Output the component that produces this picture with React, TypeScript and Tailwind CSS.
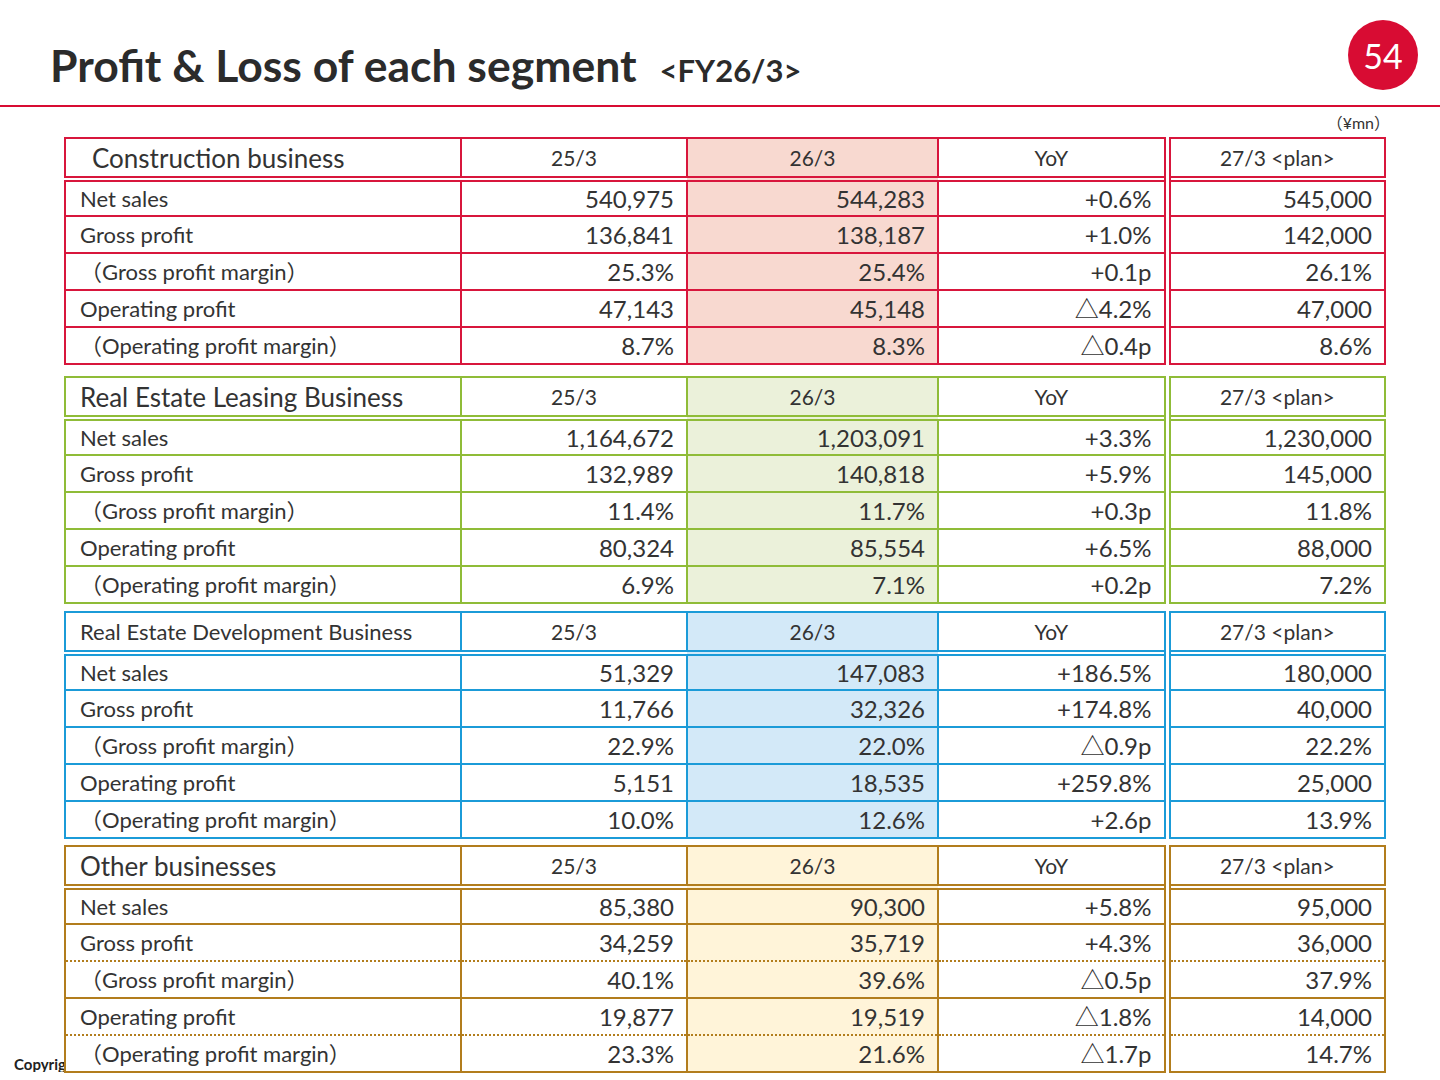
type Theme = {
  name: string;
  nameClass: string;
  line: string;
  fill: string;
  dotted?: boolean;
  rows: string[][];
};

const LABELS = [
  "Net sales",
  "Gross profit",
  "（Gross profit margin）",
  "Operating profit",
  "（Operating profit margin）",
];

const SECTIONS: Theme[] = [
  {
    name: "Construction business",
    nameClass: "pl-[26px] text-[26px]",
    line: "border-[#d8163c]",
    fill: "bg-[#f8d9d0]",
    rows: [
      ["540,975", "544,283", "+0.6%", "545,000"],
      ["136,841", "138,187", "+1.0%", "142,000"],
      ["25.3%", "25.4%", "+0.1p", "26.1%"],
      ["47,143", "45,148", "△4.2%", "47,000"],
      ["8.7%", "8.3%", "△0.4p", "8.6%"],
    ],
  },
  {
    name: "Real Estate Leasing Business",
    nameClass: "pl-[14px] text-[26px]",
    line: "border-[#8fbc38]",
    fill: "bg-[#ebf1da]",
    rows: [
      ["1,164,672", "1,203,091", "+3.3%", "1,230,000"],
      ["132,989", "140,818", "+5.9%", "145,000"],
      ["11.4%", "11.7%", "+0.3p", "11.8%"],
      ["80,324", "85,554", "+6.5%", "88,000"],
      ["6.9%", "7.1%", "+0.2p", "7.2%"],
    ],
  },
  {
    name: "Real Estate Development Business",
    nameClass: "pl-[14px] text-[22px]",
    line: "border-[#1b9bd8]",
    fill: "bg-[#d3e9f8]",
    rows: [
      ["51,329", "147,083", "+186.5%", "180,000"],
      ["11,766", "32,326", "+174.8%", "40,000"],
      ["22.9%", "22.0%", "△0.9p", "22.2%"],
      ["5,151", "18,535", "+259.8%", "25,000"],
      ["10.0%", "12.6%", "+2.6p", "13.9%"],
    ],
  },
  {
    name: "Other businesses",
    nameClass: "pl-[14px] text-[26px]",
    line: "border-[#b27d1d]",
    fill: "bg-[#fff4d9]",
    dotted: true,
    rows: [
      ["85,380", "90,300", "+5.8%", "95,000"],
      ["34,259", "35,719", "+4.3%", "36,000"],
      ["40.1%", "39.6%", "△0.5p", "37.9%"],
      ["19,877", "19,519", "△1.8%", "14,000"],
      ["23.3%", "21.6%", "△1.7p", "14.7%"],
    ],
  },
];

const FONT = "font-['Lato','Noto_Sans_CJK_JP',sans-serif]";

function Section({ t, gap }: { t: Theme; gap: string }) {
  const cell = `border-2 ${t.line} p-0`;
  const head = `${cell} border-b-[6px] [border-bottom-style:double] text-[21px] font-normal`;
  const dbl = "border-r-[7px] [border-right-style:double]";

  return (
    <table className={`${gap} relative z-10 w-[1320px] table-fixed border-collapse bg-white leading-none`}>
      <colgroup>
        <col className="w-[396px]" />
        <col className="w-[226px]" />
        <col className="w-[251px]" />
        <col className="w-[229px]" />
        <col className="w-[218px]" />
      </colgroup>
      <thead>
        <tr className="h-[41px]">
          <th className={`${head} ${t.nameClass} text-left`}>{t.name}</th>
          <th className={head}>25/3</th>
          <th className={`${head} ${t.fill}`}>26/3</th>
          <th className={`${head} ${dbl}`}>YoY</th>
          <th className={head}>27/3 &lt;plan&gt;</th>
        </tr>
      </thead>
      <tbody>
        {t.rows.map((r, i) => {
          // dotted line between a profit row and its margin row (last block only)
          let dot = "";
          if (t.dotted && (i === 1 || i === 3)) dot = "[border-bottom-style:dotted]";
          if (t.dotted && (i === 2 || i === 4)) dot = "[border-top-style:dotted]";
          return (
            <tr key={i} className="h-[37px]">
              <td className={`${cell} ${dot} pl-[14px] text-[22px] whitespace-nowrap`}>{LABELS[i]}</td>
              <td className={`${cell} ${dot} pr-[12px] text-right text-[24px]`}>{r[0]}</td>
              <td className={`${cell} ${dot} ${t.fill} pr-[12px] text-right text-[24px]`}>{r[1]}</td>
              <td className={`${cell} ${dot} ${dbl} pr-[12px] text-right text-[24px]`}>{r[2]}</td>
              <td className={`${cell} ${dot} pr-[12px] text-right text-[24px]`}>{r[3]}</td>
            </tr>
          );
        })}
      </tbody>
    </table>
  );
}

export default function App() {
  return (
    <div className={`${FONT} relative h-[1080px] w-[1440px] overflow-hidden bg-white text-[#333333]`}>
      <header className="flex h-[105px] items-start justify-between">
        <h1 className="flex items-baseline pt-[43px] pl-[50px] text-[#2b2b2b]">
          <span className="text-[44.5px] leading-none font-bold">Profit &amp; Loss of each segment</span>
          <span className="ml-[23px] text-[31px] leading-none font-bold">&lt;FY26/3&gt;</span>
        </h1>
        <div className="mt-[20px] mr-[22px] flex h-[70px] w-[70px] items-center justify-center rounded-full bg-[#d80c33] text-[34px] text-white">
          54
        </div>
      </header>
      <div className="h-[2px] bg-[#d80c33]" />

      <div className="flex flex-col items-start pl-[64px]">
        <div className="flex h-[30px] w-[1320px] items-start justify-end pt-[8px] text-[16px] leading-none">
          <span className="-mr-[6px]">（¥mn）</span>
        </div>
        {SECTIONS.map((s, i) => (
          <Section
            key={s.name}
            t={s}
            gap={i === 0 ? "mt-0" : i === 1 ? "mt-[11px]" : i === 2 ? "mt-[7px]" : "mt-[6px]"}
          />
        ))}
      </div>

      <div className="absolute bottom-[8px] left-[14px] z-0 w-[50px] overflow-hidden text-[15px] leading-none font-bold whitespace-nowrap text-[#222222]">
        Copyright
      </div>
    </div>
  );
}
